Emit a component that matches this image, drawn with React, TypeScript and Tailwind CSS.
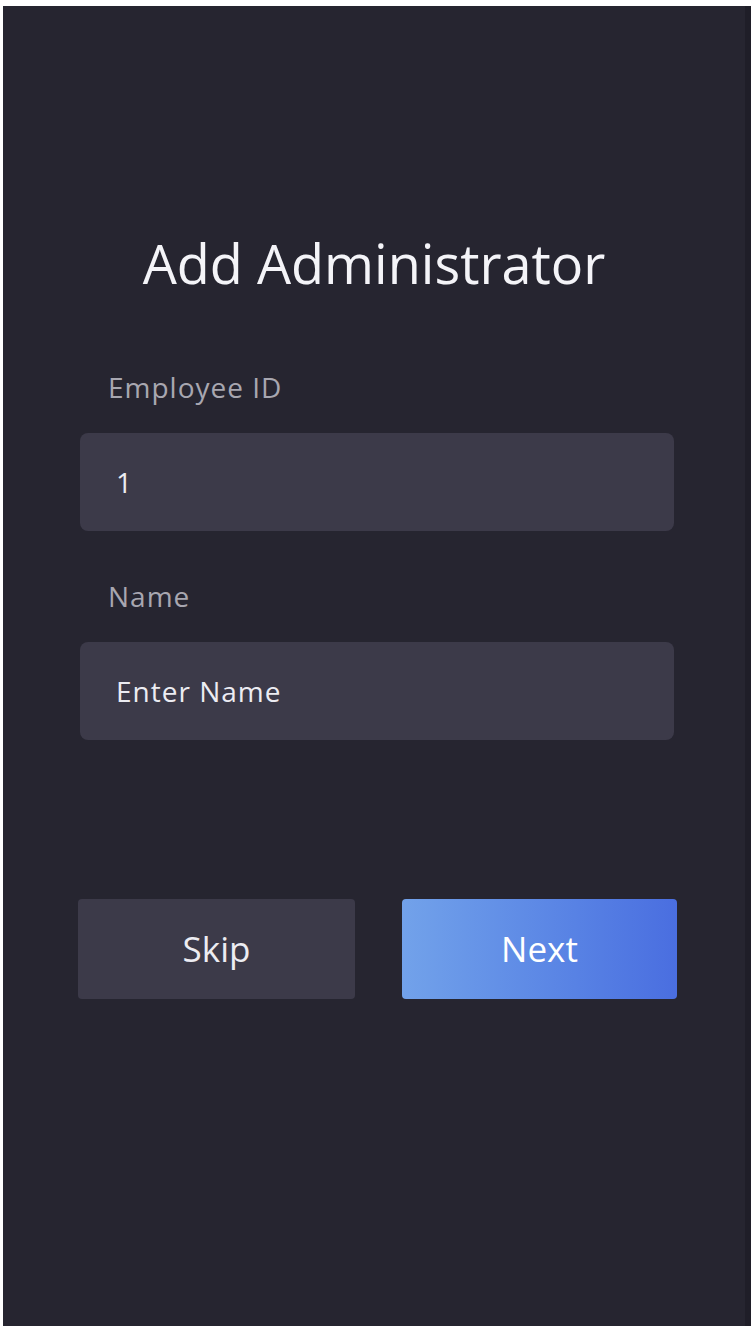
import React from "react";

const font = { fontFamily: '"Open Sans", "Noto Sans", sans-serif' };

function Field({ label, value, top }: { label: string; value: string; top: string }) {
  return (
    <div className={`flex flex-col ${top}`}>
      <div className="pl-[105px] text-[28px] leading-none tracking-[1px] text-[#a8a7b0]">{label}</div>
      <div className="mt-[32px] ml-[77px] flex h-[98px] w-[594px] items-center rounded-[8px] bg-[#3c3a49] pl-[36px] text-[28px] tracking-[1px] text-[#ececf2]">
        {value}
      </div>
    </div>
  );
}

export default function App() {
  return (
    <div className="h-[1329px] w-[751px] bg-white pt-[6px] pl-[3px] pb-[3px]" style={font}>
      <div className="flex h-full flex-col border-r-[6px] border-[#1f1e28] bg-[#262530]">
        <h1 className="mt-[230px] text-center text-[54px] leading-none text-[#f4f4f8]">Add Administrator</h1>
        <Field label="Employee ID" value="1" top="mt-[83px]" />
        <Field label="Name" value="Enter Name" top="mt-[51px]" />
        <div className="mt-[159px] ml-[75px] flex gap-[47px]">
          <button className="h-[100px] w-[277px] rounded-[4px] bg-[#3c3a49] text-[35px] text-[#ececf2]">Skip</button>
          <button className="h-[100px] w-[275px] rounded-[4px] bg-gradient-to-r from-[#72a2ea] to-[#4a6ee0] text-[35px] text-white">
            Next
          </button>
        </div>
      </div>
    </div>
  );
}
